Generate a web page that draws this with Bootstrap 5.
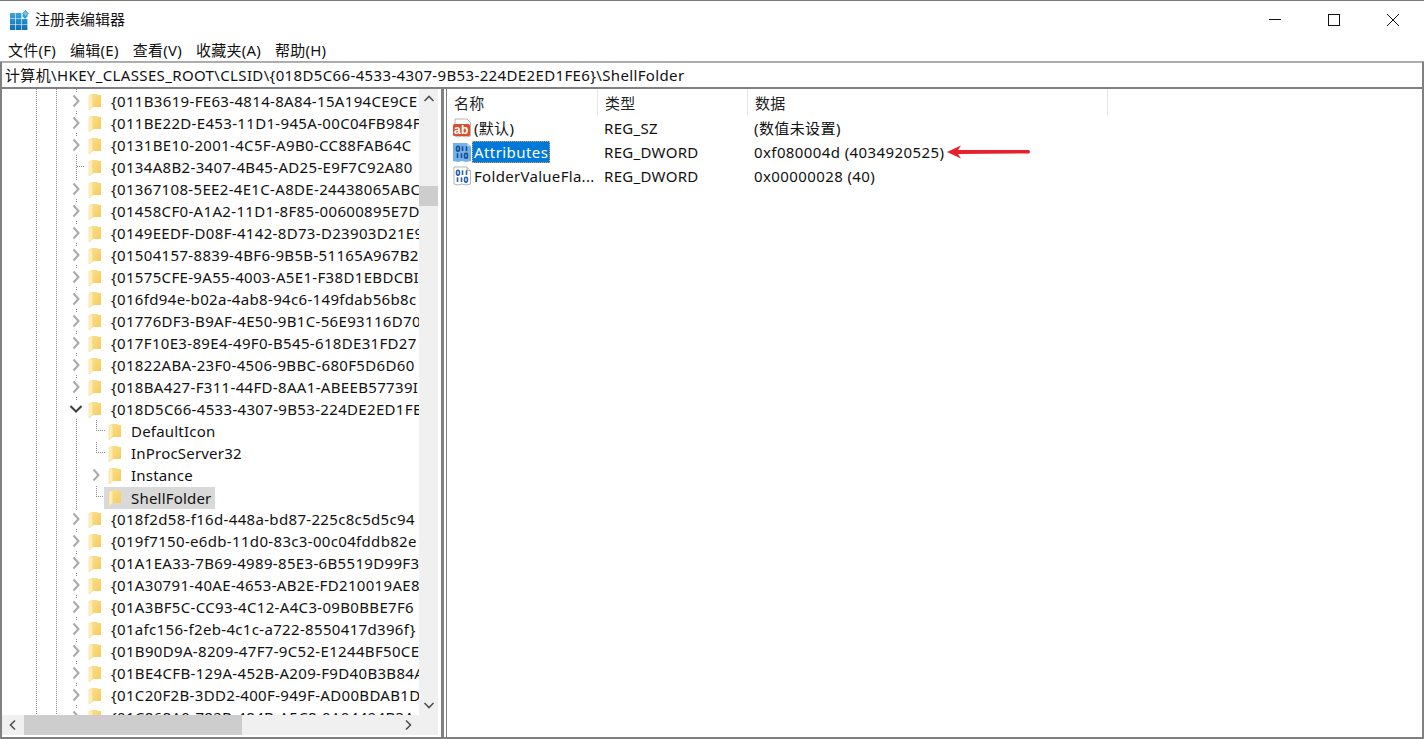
<!DOCTYPE html>
<html lang="zh-CN">
<head>
<meta charset="utf-8">
<link href="https://cdn.jsdelivr.net/npm/bootstrap@5.3.0/dist/css/bootstrap.min.css" rel="stylesheet">
<style>
html,body{height:100%;margin:0;overflow:hidden}
body{font-family:"Noto Sans","Noto Sans CJK SC",sans-serif;font-size:15px;color:#111;background:#fff}
.defs-holder{position:absolute;width:0;height:0}
.regwin{width:1424px;height:739px;border-top:1px solid #787878;display:flex;flex-direction:column}
.titlebar{height:37px;flex:none;padding-left:10px;gap:5px}
.winbtns{margin-left:auto;margin-right:2px}
.winbtn{width:59px;height:37px;display:flex;align-items:center;justify-content:center}
.menubar{height:24px;flex:none;gap:14px;padding-left:8px;letter-spacing:.25px}
.lowerpart{flex:1;min-height:0;display:flex;flex-direction:column;border:solid #808080;border-width:0 2px 2px 2px;box-shadow:0 -1px 0 #aaa}
.addr{height:27px;flex:none;border-bottom:2px solid #808080;padding-left:3px;line-height:24px;white-space:nowrap;letter-spacing:.36px;border-top:1px solid #b0b0b0}
.panes{flex:1;min-height:0}
.treepane{width:442px;flex:none;border-right:3px solid #808080;padding-right:3px;padding-bottom:2px;display:flex;flex-direction:column}
.treemain{flex:1;min-height:0;display:flex}
.treeclip{width:417px;flex:none;overflow:hidden;background-image:linear-gradient(#888 50%,transparent 50%),linear-gradient(#888 50%,transparent 50%),linear-gradient(#888 50%,transparent 50%);background-size:1px 2px,1px 2px,1px 2px;background-repeat:repeat-y;background-position:34px 0,54px 0,74px 0;padding-top:1px}
.trow{height:22px;display:flex;align-items:center;white-space:nowrap;letter-spacing:.33px}
.chev{width:12px;height:18px;flex:none;margin-left:68px;background:#fff}
.fold{width:14px;height:16px;flex:none;margin-left:6px;margin-top:1px}
.tlabel{margin-left:9px}
.kid{letter-spacing:.2px;background:transparent}
.kid .chev{margin-left:88px;background:transparent}
.selrow .tlabel{background:#d9d9d9;margin-left:-18px;padding:0 3px 0 27px;height:22px;line-height:22px;margin-top:1px}
.selrow .fold{position:relative;z-index:1}
.nochev{width:7px;height:11px;flex:none;margin-left:75px;margin-right:-2px;border-bottom:1px dotted #888;align-self:flex-start}
.kid .nochev{width:9px;margin-left:94px;margin-right:-3px;border-left:1px dotted #888}
.vbar{width:19px;flex:none;background:#f0f0f0;display:flex;flex-direction:column;align-items:center}
.vbtn{height:20px;flex:none;display:flex;align-items:center;justify-content:center;width:100%}
.vgap1{height:77px;flex:none}
.vthumb{height:20px;flex:none;background:#cdcdcd;width:100%}
.hbar{height:20px;flex:none;background:#f0f0f0;display:flex;align-items:center;width:436px}
.hbtn{width:22px;height:20px;flex:none;display:flex;align-items:center;justify-content:center}
.hthumb{width:218px;height:20px;flex:none;background:#cdcdcd}
.hright{margin-left:auto;margin-right:19px}
.listpane{flex:1;min-width:0;border-left:1px solid #808080;margin-left:2px;letter-spacing:.3px}
.lhead{height:27px;display:flex;color:#222}
.lhc{border-right:1px solid #e5e5e5;padding-left:7px;height:26px;line-height:29px;flex:none}
.c1{width:151px}.c2{width:150px}.c3{width:360px}
.lrow{height:24px;display:flex;align-items:center;white-space:nowrap}
.lcol1{width:150px;flex:none;display:flex;align-items:center;padding-left:5px}
.lcol2{width:150px;flex:none;padding-left:7px}
.lcol3{flex:none;padding-left:7px;letter-spacing:.4px}
.regico{width:20px;height:20px;flex:none}
.lname{padding:0 2px;height:22px;line-height:23px}
.lsel{background:#0078d7;color:#fff;outline:1px dotted #e8a060;outline-offset:-1px;letter-spacing:.42px}
.arrow{width:84px;height:14px;flex:none;margin-left:3px}
</style>
</head>
<body>
<svg class="defs-holder">
<defs>
<linearGradient id="fg" x1="0" y1="0" x2="1" y2="0"><stop offset="0" stop-color="#fff4c8"/><stop offset="1" stop-color="#fde7a0"/></linearGradient>
<linearGradient id="fb" x1="0" y1="0" x2="1" y2="1"><stop offset="0" stop-color="#fbdf88"/><stop offset="1" stop-color="#f6cc60"/></linearGradient>
<linearGradient id="gridg" x1="0" y1="0" x2="0" y2="1"><stop offset="0" stop-color="#3aa6df"/><stop offset="1" stop-color="#0c6fb2"/></linearGradient>
<symbol id="folder" viewBox="0 0 14 16">
<path d="M4 0 H9 L10 1 H13 V13 H4 Z" fill="url(#fb)"/>
<path d="M1 1.500 L5 0 V13 L1 16 Z" fill="url(#fg)" stroke="#f2cf78" stroke-width=".5"/>
</symbol>
<symbol id="chevr" viewBox="0 0 12 18"><path d="M3.500 3.500 L8.500 9 L3.500 14.500" fill="none" stroke="#a9a9a9" stroke-width="2"/></symbol>
<symbol id="chevd" viewBox="0 0 12 18"><path d="M.5 6 L6 11.500 L11.500 6" fill="none" stroke="#404040" stroke-width="2"/></symbol>
<symbol id="dw" viewBox="0 0 20 20">
<path d="M2 1 H15 L18.500 4.500 V18 L14 19 L10 18 L6 19 L2 18 Z" fill="#fff" stroke="#b5b5b5"/>
<path d="M15 1 V4.500 H18.500" fill="#e8e8e8" stroke="#b5b5b5"/>
<g fill="none" stroke="#2a62a8" stroke-width="1.600"><ellipse cx="6" cy="6.700" rx="1.500" ry="2.400"/><path d="M10.500 4.300 V9"/><path d="M14.500 4.300 V9"/><path d="M5.500 11.300 V16"/><path d="M9.500 11.300 V16"/><ellipse cx="14" cy="13.700" rx="1.500" ry="2.400"/></g>
</symbol>
<symbol id="dwsel" viewBox="0 0 20 20">
<path d="M1 1 H15 L19 4.500 V19 L14 20 L10 19 L6 20 L1 19 Z" fill="#74b0ea"/>
<path d="M15 1 V4.500 H19" fill="#a8d0f4"/>
<g fill="none" stroke="#15518f" stroke-width="1.600"><ellipse cx="6" cy="6.700" rx="1.500" ry="2.400"/><path d="M10.500 4.300 V9"/><path d="M14.500 4.300 V9"/><path d="M5.500 11.300 V16"/><path d="M9.500 11.300 V16"/><ellipse cx="14" cy="13.700" rx="1.500" ry="2.400"/></g>
</symbol>
</defs>
</svg>
<div class="regwin">
<div class="titlebar d-flex align-items-center">
<svg width="20" height="20" viewBox="0 0 20 20" class="flex-shrink-0"><g fill="url(#gridg)"><path d="M0 3 H5.400 V8.600 H0 Z M6 3 H11.400 V8.600 H6 Z M0 9 H5.400 V14.400 H0 Z M6 9 H11.400 V14.400 H6 Z M12 9 H17.400 V14.400 H12 Z M0 15 H5.400 V20 H0 Z M6 15 H11.400 V20 H6 Z M12 15 H17.400 V20 H12 Z"/></g><path d="M15 3 L18 6 L15 9 L12 6 Z" fill="#2ea6e0"/><path d="M15.500 .5 L18.500 3.500 L15.500 6.500 L12.500 3.500 Z" fill="#6cc0ea" stroke="#2a85bd" stroke-width=".6"/></svg>
<span>注册表编辑器</span>
<div class="winbtns d-flex">
<div class="winbtn"><svg width="14" height="14" viewBox="0 0 14 14"><path d="M1 6.500H13" stroke="#111" fill="none"/></svg></div>
<div class="winbtn"><svg width="14" height="14" viewBox="0 0 14 14"><rect x="1.500" y="1.500" width="11" height="11" stroke="#111" fill="none"/></svg></div>
<div class="winbtn"><svg width="14" height="14" viewBox="0 0 14 14"><path d="M1 1 L13 13 M13 1 L1 13" stroke="#111" fill="none"/></svg></div>
</div>
</div>
<div class="menubar d-flex align-items-center">
<span>文件(F)</span><span>编辑(E)</span><span>查看(V)</span><span>收藏夹(A)</span><span>帮助(H)</span>
</div>
<div class="lowerpart">
<div class="addr">计算机\HKEY_CLASSES_ROOT\CLSID\{018D5C66-4533-4307-9B53-224DE2ED1FE6}\ShellFolder</div>
<div class="panes d-flex">
<div class="treepane">
<div class="treemain">
<div class="treeclip">
<div class="trow"><svg class="chev"><use href="#chevr"/></svg><svg class="fold"><use href="#folder"/></svg><span class="tlabel">{011B3619-FE63-4814-8A84-15A194CE9CE</span></div>
<div class="trow"><svg class="chev"><use href="#chevr"/></svg><svg class="fold"><use href="#folder"/></svg><span class="tlabel">{011BE22D-E453-11D1-945A-00C04FB984F</span></div>
<div class="trow"><svg class="chev"><use href="#chevr"/></svg><svg class="fold"><use href="#folder"/></svg><span class="tlabel">{0131BE10-2001-4C5F-A9B0-CC88FAB64C</span></div>
<div class="trow"><span class="nochev"></span><svg class="fold"><use href="#folder"/></svg><span class="tlabel">{0134A8B2-3407-4B45-AD25-E9F7C92A80</span></div>
<div class="trow"><svg class="chev"><use href="#chevr"/></svg><svg class="fold"><use href="#folder"/></svg><span class="tlabel">{01367108-5EE2-4E1C-A8DE-24438065ABC</span></div>
<div class="trow"><svg class="chev"><use href="#chevr"/></svg><svg class="fold"><use href="#folder"/></svg><span class="tlabel">{01458CF0-A1A2-11D1-8F85-00600895E7D</span></div>
<div class="trow"><svg class="chev"><use href="#chevr"/></svg><svg class="fold"><use href="#folder"/></svg><span class="tlabel">{0149EEDF-D08F-4142-8D73-D23903D21E9</span></div>
<div class="trow"><svg class="chev"><use href="#chevr"/></svg><svg class="fold"><use href="#folder"/></svg><span class="tlabel">{01504157-8839-4BF6-9B5B-51165A967B2</span></div>
<div class="trow"><svg class="chev"><use href="#chevr"/></svg><svg class="fold"><use href="#folder"/></svg><span class="tlabel">{01575CFE-9A55-4003-A5E1-F38D1EBDCBI</span></div>
<div class="trow"><svg class="chev"><use href="#chevr"/></svg><svg class="fold"><use href="#folder"/></svg><span class="tlabel">{016fd94e-b02a-4ab8-94c6-149fdab56b8c</span></div>
<div class="trow"><svg class="chev"><use href="#chevr"/></svg><svg class="fold"><use href="#folder"/></svg><span class="tlabel">{01776DF3-B9AF-4E50-9B1C-56E93116D70</span></div>
<div class="trow"><svg class="chev"><use href="#chevr"/></svg><svg class="fold"><use href="#folder"/></svg><span class="tlabel">{017F10E3-89E4-49F0-B545-618DE31FD27</span></div>
<div class="trow"><svg class="chev"><use href="#chevr"/></svg><svg class="fold"><use href="#folder"/></svg><span class="tlabel">{01822ABA-23F0-4506-9BBC-680F5D6D60</span></div>
<div class="trow"><svg class="chev"><use href="#chevr"/></svg><svg class="fold"><use href="#folder"/></svg><span class="tlabel">{018BA427-F311-44FD-8AA1-ABEEB57739I</span></div>
<div class="trow"><svg class="chev"><use href="#chevd"/></svg><svg class="fold"><use href="#folder"/></svg><span class="tlabel">{018D5C66-4533-4307-9B53-224DE2ED1FE6}</span></div>
<div class="trow kid"><span class="nochev"></span><svg class="fold"><use href="#folder"/></svg><span class="tlabel">DefaultIcon</span></div>
<div class="trow kid"><span class="nochev"></span><svg class="fold"><use href="#folder"/></svg><span class="tlabel">InProcServer32</span></div>
<div class="trow kid"><svg class="chev"><use href="#chevr"/></svg><svg class="fold"><use href="#folder"/></svg><span class="tlabel">Instance</span></div>
<div class="trow kid selrow"><span class="nochev"></span><svg class="fold"><use href="#folder"/></svg><span class="tlabel">ShellFolder</span></div>
<div class="trow"><svg class="chev"><use href="#chevr"/></svg><svg class="fold"><use href="#folder"/></svg><span class="tlabel">{018f2d58-f16d-448a-bd87-225c8c5d5c94</span></div>
<div class="trow"><svg class="chev"><use href="#chevr"/></svg><svg class="fold"><use href="#folder"/></svg><span class="tlabel">{019f7150-e6db-11d0-83c3-00c04fddb82e</span></div>
<div class="trow"><svg class="chev"><use href="#chevr"/></svg><svg class="fold"><use href="#folder"/></svg><span class="tlabel">{01A1EA33-7B69-4989-85E3-6B5519D99F3</span></div>
<div class="trow"><svg class="chev"><use href="#chevr"/></svg><svg class="fold"><use href="#folder"/></svg><span class="tlabel">{01A30791-40AE-4653-AB2E-FD210019AE8</span></div>
<div class="trow"><svg class="chev"><use href="#chevr"/></svg><svg class="fold"><use href="#folder"/></svg><span class="tlabel">{01A3BF5C-CC93-4C12-A4C3-09B0BBE7F6</span></div>
<div class="trow"><svg class="chev"><use href="#chevr"/></svg><svg class="fold"><use href="#folder"/></svg><span class="tlabel">{01afc156-f2eb-4c1c-a722-8550417d396f}</span></div>
<div class="trow"><svg class="chev"><use href="#chevr"/></svg><svg class="fold"><use href="#folder"/></svg><span class="tlabel">{01B90D9A-8209-47F7-9C52-E1244BF50CE</span></div>
<div class="trow"><svg class="chev"><use href="#chevr"/></svg><svg class="fold"><use href="#folder"/></svg><span class="tlabel">{01BE4CFB-129A-452B-A209-F9D40B3B84A</span></div>
<div class="trow"><svg class="chev"><use href="#chevr"/></svg><svg class="fold"><use href="#folder"/></svg><span class="tlabel">{01C20F2B-3DD2-400F-949F-AD00BDAB1D</span></div>
<div class="trow"><svg class="chev"><use href="#chevr"/></svg><svg class="fold"><use href="#folder"/></svg><span class="tlabel">{01C868A0-782B-484B-A5C8-0A04494B3A</span></div>
</div>
<div class="vbar">
<div class="vbtn"><svg width="12" height="12" viewBox="0 0 12 12"><path d="M1.500 8 L6 3.500 L10.500 8" fill="none" stroke="#505050" stroke-width="1.600"/></svg></div>
<div class="vgap1"></div>
<div class="vthumb"></div>
<div class="flex-grow-1"></div>
<div class="vbtn"><svg width="12" height="12" viewBox="0 0 12 12"><path d="M1.500 4 L6 8.500 L10.500 4" fill="none" stroke="#505050" stroke-width="1.600"/></svg></div>
</div>
</div>
<div class="hbar">
<div class="hbtn"><svg width="12" height="12" viewBox="0 0 12 12"><path d="M8 1.500 L3.500 6 L8 10.500" fill="none" stroke="#505050" stroke-width="1.600"/></svg></div>
<div class="hthumb"></div>
<div class="hbtn hright"><svg width="12" height="12" viewBox="0 0 12 12"><path d="M4 1.500 L8.500 6 L4 10.500" fill="none" stroke="#505050" stroke-width="1.600"/></svg></div>
</div>
</div>
<div class="listpane">
<div class="lhead"><div class="lhc c1">名称</div><div class="lhc c2">类型</div><div class="lhc c3">数据</div></div>
<div class="lrow"><div class="lcol1"><svg class="regico" viewBox="0 0 20 20"><path d="M3 1 H15 L18.500 4.500 V18 L14 19 L10 18 L6 19 L3 18 Z" fill="#fff" stroke="#b5b5b5"/><rect x="1" y="6" width="17" height="12" fill="#d9502f" rx="1.500"/><text x="2" y="15.500" font-size="12" font-weight="700" fill="#fff" font-family="Liberation Sans">ab</text></svg><span class="lname">(默认)</span></div><div class="lcol2">REG_SZ</div><div class="lcol3">(数值未设置)</div></div>
<div class="lrow"><div class="lcol1"><svg class="regico"><use href="#dwsel"/></svg><span class="lname lsel">Attributes</span></div><div class="lcol2">REG_DWORD</div><div class="lcol3 d-flex align-items-center">0xf080004d (4034920525)<svg class="arrow" viewBox="0 0 84 14"><path d="M0 7 L14 .5 L11 5 L82 5 Q84 7 82 8.500 L11 9 L14 13.500 Z" fill="#e8202e"/></svg></div></div>
<div class="lrow"><div class="lcol1"><svg class="regico"><use href="#dw"/></svg><span class="lname">FolderValueFla...</span></div><div class="lcol2">REG_DWORD</div><div class="lcol3">0x00000028 (40)</div></div>
</div>
</div>
</div>
</div>
</body>
</html>
